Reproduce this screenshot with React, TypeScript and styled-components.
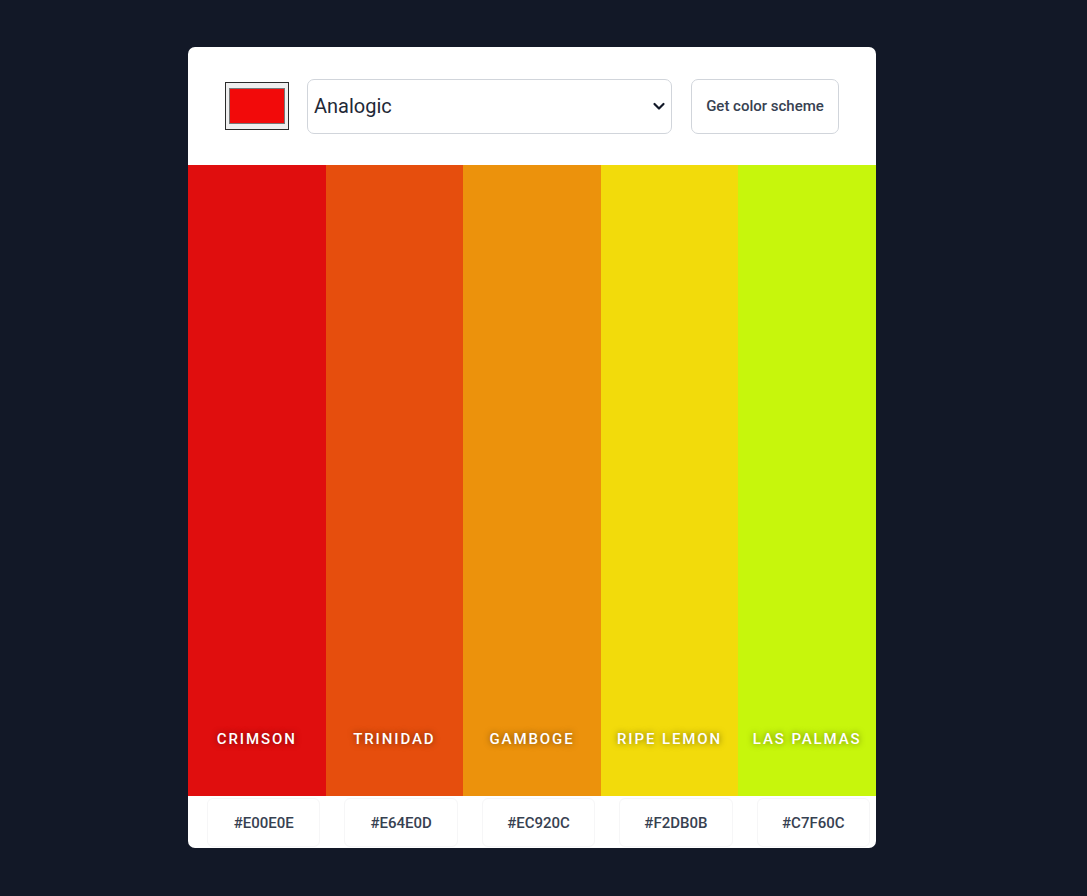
import React from 'react'
import styled, { createGlobalStyle } from 'styled-components'

interface Swatch {
  name: string;
  hex: string;
}

const swatches: Swatch[] = [
  { name: 'Crimson', hex: '#E00E0E' },
  { name: 'Trinidad', hex: '#E64E0D' },
  { name: 'Gamboge', hex: '#EC920C' },
  { name: 'Ripe Lemon', hex: '#F2DB0B' },
  { name: 'Las Palmas', hex: '#C7F60C' },
];

export default function App() {
  return (
    <>
      <GlobalStyle />
      <Page>
        <Card>
          <Header>
            <ColorInput type="color" defaultValue="#f20a0a" />
            <SelectWrap>
              <Select defaultValue="analogic">
                <option value="monochrome">Monochrome</option>
                <option value="analogic">Analogic</option>
                <option value="complement">Complement</option>
                <option value="triad">Triad</option>
              </Select>
              <Chevron viewBox="0 0 16 16" width="16" height="16">
                <path d="M3.5 6 L8 10.5 L12.5 6" fill="none" stroke="#111827" strokeWidth="2.2" strokeLinecap="round" strokeLinejoin="round" />
              </Chevron>
            </SelectWrap>
            <SchemeButton>Get color scheme</SchemeButton>
          </Header>
          <Stripes>
            {swatches.map((s) => (
              <Stripe key={s.hex} $color={s.hex}>
                <StripeName>{s.name}</StripeName>
              </Stripe>
            ))}
          </Stripes>
          <HexRow>
            {swatches.map((s) => (
              <HexCell key={s.hex}>{s.hex}</HexCell>
            ))}
          </HexRow>
        </Card>
      </Page>
    </>
  )
}

const GlobalStyle = createGlobalStyle`
  html, body {
    margin: 0;
    padding: 0;
    background: #121827;
    font-family: Roboto, "Liberation Sans", sans-serif;
  }
`;

const Page = styled.div`
  min-height: 896px;
  box-sizing: border-box;
  padding: 47px 0 48px 188px;
  background: #121827;
`;

const Card = styled.div`
  width: 688px;
  background: #FFFFFF;
  border-radius: 7px;
  overflow: hidden;
  display: flex;
  flex-direction: column;
`;

const Header = styled.div`
  height: 118px;
  display: flex;
  align-items: center;
  padding: 0 37px;
  gap: 18px;
  box-sizing: border-box;
`;

const ColorInput = styled.input`
  width: 64px;
  height: 48px;
  padding: 0;
  margin: 0;
  border: 1px solid #2b2b2b;
  background: #efefef;
  box-sizing: border-box;
  cursor: pointer;

  &::-webkit-color-swatch-wrapper {
    padding: 5px 3px;
  }
  &::-webkit-color-swatch {
    border: 1px solid #777777;
    border-radius: 0;
  }
`;

const SelectWrap = styled.div`
  position: relative;
  width: 365px;
  height: 55px;
`;

const Select = styled.select`
  appearance: none;
  width: 100%;
  height: 100%;
  margin: 0;
  padding: 0 36px 0 6px;
  border: 1px solid #d1d5db;
  border-radius: 7px;
  background: #FFFFFF;
  color: #1f2937;
  font-family: Roboto, "Liberation Sans", sans-serif;
  font-size: 20px;
  font-weight: 400;
  outline: none;
`;

const Chevron = styled.svg`
  position: absolute;
  right: 5px;
  top: 19px;
  pointer-events: none;
`;

const SchemeButton = styled.button`
  margin-left: 1px;
  width: 148px;
  height: 55px;
  padding: 0;
  border: 1px solid #d1d5db;
  border-radius: 7px;
  background: #FFFFFF;
  color: #374151;
  font-family: Roboto, "Liberation Sans", sans-serif;
  font-size: 15px;
  font-weight: 500;
  cursor: pointer;
`;

const Stripes = styled.div`
  display: grid;
  grid-template-columns: repeat(5, 1fr);
  height: 631px;
`;

const Stripe = styled.div<{ $color: string }>`
  background: ${(p) => p.$color};
  display: flex;
  flex-direction: column;
  justify-content: flex-end;
  align-items: center;
  padding-bottom: 48px;
`;

const StripeName = styled.span`
  color: #FFFFFF;
  font-family: Roboto, "Liberation Sans", sans-serif;
  font-size: 15px;
  font-weight: 500;
  line-height: 18px;
  letter-spacing: 1.9px;
  text-transform: uppercase;
  text-shadow: 0 0 6px rgba(0, 0, 0, 0.5);
  white-space: nowrap;
`;

const HexRow = styled.div`
  display: grid;
  grid-template-columns: repeat(5, 1fr);
  gap: 24px;
  height: 52px;
  padding: 2px 6px 1px 19px;
  box-sizing: border-box;
`;

const HexCell = styled.div`
  display: flex;
  align-items: center;
  justify-content: center;
  border: 1px solid #f6f6f7;
  border-radius: 6px;
  color: #374151;
  font-family: Roboto, "Liberation Sans", sans-serif;
  font-size: 15px;
  font-weight: 500;
`;
